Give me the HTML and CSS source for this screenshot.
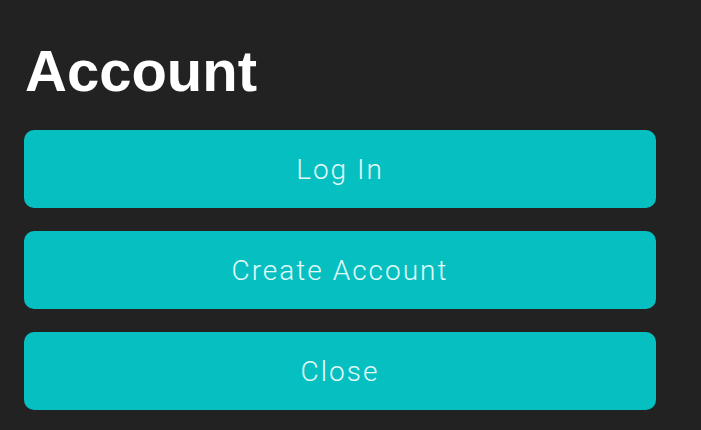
FILE: index.html
```html
<!DOCTYPE html>
<html>
<head>
<meta charset="utf-8">
<link rel="stylesheet" href="styles.css">
</head>
<body>
<div class="panel">
  <h1 class="title">Account</h1>
  <div class="buttons">
    <button class="btn">Log In</button>
    <button class="btn">Create Account</button>
    <button class="btn">Close</button>
  </div>
</div>
</body>
</html>
```
FILE: styles.css
```css
html, body {
  margin: 0;
  padding: 0;
  background: #222222;
  width: 701px;
  height: 430px;
  overflow: hidden;
}
.panel {
  padding: 38px 45px 0 24px;
}
.title {
  margin: 0 0 0 1px;
  font-family: "Liberation Sans", Arial, sans-serif;
  font-weight: bold;
  font-size: 58px;
  line-height: 66px;
  color: #ffffff;
}
.buttons {
  margin-top: 26px;
  display: flex;
  flex-direction: column;
  gap: 23px;
}
.btn {
  height: 78px;
  border: none;
  border-radius: 10px;
  background: #06bfc0;
  color: #e2fafa;
  font-family: Roboto, "Liberation Sans", sans-serif;
  font-weight: 300;
  font-size: 28px;
  letter-spacing: 2px;
  padding: 0;
  width: 632px;
}
```
